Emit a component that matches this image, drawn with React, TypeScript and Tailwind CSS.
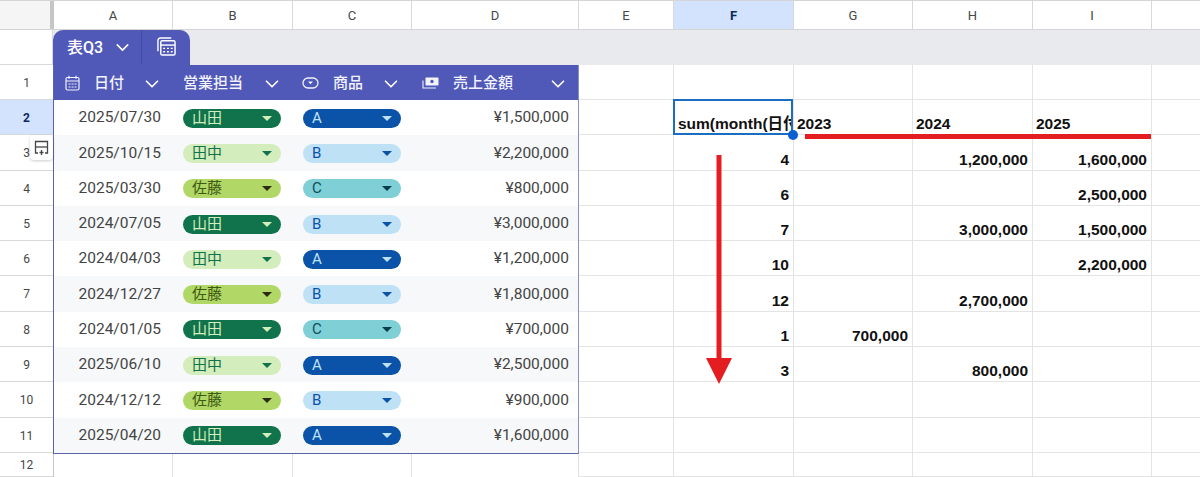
import { ChevronDown } from 'lucide-react';

const rows = [
  { date: '2025/07/30', rep: '山田', item: 'A', amount: '¥1,500,000' },
  { date: '2025/10/15', rep: '田中', item: 'B', amount: '¥2,200,000' },
  { date: '2025/03/30', rep: '佐藤', item: 'C', amount: '¥800,000' },
  { date: '2024/07/05', rep: '山田', item: 'B', amount: '¥3,000,000' },
  { date: '2024/04/03', rep: '田中', item: 'A', amount: '¥1,200,000' },
  { date: '2024/12/27', rep: '佐藤', item: 'B', amount: '¥1,800,000' },
  { date: '2024/01/05', rep: '山田', item: 'C', amount: '¥700,000' },
  { date: '2025/06/10', rep: '田中', item: 'A', amount: '¥2,500,000' },
  { date: '2024/12/12', rep: '佐藤', item: 'B', amount: '¥900,000' },
  { date: '2025/04/20', rep: '山田', item: 'A', amount: '¥1,600,000' },
];

const chipStyles: Record<string, string> = {
  山田: 'bg-[#11734b] text-[#d4edbc]',
  田中: 'bg-[#d4edbc] text-[#11734b]',
  佐藤: 'bg-[#b1d866] text-[#3d5a12]',
  A: 'bg-[#0a53a8] text-[#bfe1f6]',
  B: 'bg-[#bfe1f6] text-[#0a53a8]',
  C: 'bg-[#7fcfd6] text-[#0a4f5c]',
};

const caretStyles: Record<string, string> = {
  山田: 'border-t-[#d4edbc]',
  田中: 'border-t-[#11734b]',
  佐藤: 'border-t-[#2b2b10]',
  A: 'border-t-[#bfe1f6]',
  B: 'border-t-[#0a53a8]',
  C: 'border-t-[#0a3d4c]',
};

// F..J on the right of the table
const pivot = [
  ['', '', '', '', ''],
  ['sum(month(日付', '2023', '2024', '2025', ''],
  ['4', '', '1,200,000', '1,600,000', ''],
  ['6', '', '', '2,500,000', ''],
  ['7', '', '3,000,000', '1,500,000', ''],
  ['10', '', '', '2,200,000', ''],
  ['12', '', '2,700,000', '', ''],
  ['1', '700,000', '', '', ''],
  ['3', '', '800,000', '', ''],
  ['', '', '', '', ''],
  ['', '', '', '', ''],
  ['', '', '', '', ''],
];

const rowHeights = ['h-[35px]', 'h-[35px]', 'h-[35.5px]', 'h-[35.5px]', 'h-[35px]', 'h-[35px]', 'h-[35.5px]', 'h-[35.5px]', 'h-[35px]', 'h-[35.5px]', 'h-[35px]', 'h-[24.5px]'];

function Chip({ label }: { label: string }) {
  return (
    <div className={`mt-px flex h-[19px] w-[98px] items-center justify-between rounded-full pl-[9px] pr-[9px] text-[15px] leading-none ${chipStyles[label]}`}>
      <span>{label}</span>
      <span className={`h-0 w-0 border-x-[5px] border-t-[5px] border-x-transparent ${caretStyles[label]}`} />
    </div>
  );
}

function HeaderCell({ className, icon, label }: { className: string; icon?: React.ReactNode; label: string }) {
  return (
    <div className={`flex h-full items-center text-[15px] font-medium text-[#f1f2fb] ${className}`}>
      {icon}
      <span className="pt-px">{label}</span>
      <ChevronDown className="ml-auto mr-[9px] mt-[2px] text-white" size={22} strokeWidth={1.8} />
    </div>
  );
}

function CalendarIcon() {
  return (
    <svg className="ml-[11px] mr-[14px]" width="15" height="16" viewBox="0 0 15 16" fill="none" stroke="currentColor" strokeWidth="1.2">
      <rect x="1" y="2.5" width="13" height="12.5" rx="1.5" />
      <path d="M1 6h13M4 .8v3M11 .8v3" />
      <path d="M3.5 9h2M6.5 9h2M9.5 9h2M3.5 12h2M6.5 12h2M9.5 12h2" />
    </svg>
  );
}

function DropdownIcon() {
  return (
    <svg className="mr-[14px] ml-[10px]" width="17" height="12" viewBox="0 0 17 12" fill="none" stroke="currentColor" strokeWidth="1.3">
      <rect x="1" y="1" width="15" height="10" rx="5" />
      <path d="M6 4.6h5L8.5 7.2z" fill="currentColor" stroke="none" />
    </svg>
  );
}

function MoneyIcon() {
  return (
    <svg className="mr-[14px] ml-[11px]" width="17" height="12" viewBox="0 0 17 12" fill="none" stroke="currentColor" strokeWidth="1.1">
      <rect x="3.5" y=".5" width="13" height="8" rx=".8" fill="currentColor" stroke="none" />
      <circle cx="10" cy="4.5" r="1.7" fill="#5059b8" stroke="none" />
      <path d="M1 3.5v7.5h13" />
    </svg>
  );
}

function TableIcon() {
  return (
    <svg className="mb-[2px]" width="19" height="19" viewBox="0 0 20 20" fill="none" stroke="currentColor" strokeWidth="1.5">
      <path d="M1 15V3.5A2.5 2.5 0 0 1 3.5 1H15" />
      <rect x="4" y="4" width="15" height="15" rx="1.5" />
      <path d="M4 8.5h15" />
      <path d="M6.5 12h2M10.5 12h2M14.5 12h2M6.5 15.5h2M10.5 15.5h2M14.5 15.5h2" />
    </svg>
  );
}

function HeaderLetter({ letter, className, active }: { letter: string; className: string; active?: boolean }) {
  return (
    <div className={`flex items-center justify-center border-r border-[#d9d9d9] pt-px text-[13px] ${active ? 'bg-[#d3e3fd] font-bold text-[#0b2a5b]' : 'text-[#444746]'} ${className}`}>
      {letter}
    </div>
  );
}

export default function App() {
  return (
    <div
      className="relative h-[477px] w-[1200px] overflow-hidden bg-white"
      style={{ fontFamily: 'Roboto, "Noto Sans CJK JP", sans-serif' }}
    >
      {/* column letters */}
      <div className="flex h-[30px] border-y border-[#d5d5d5]">
        <div className="w-[54px] border-r-4 border-[#c4c7c5] bg-[#f5f5f5]" />
        <HeaderLetter letter="A" className="w-[119px]" />
        <HeaderLetter letter="B" className="w-[120px]" />
        <HeaderLetter letter="C" className="w-[119px]" />
        <HeaderLetter letter="D" className="w-[167px]" />
        <HeaderLetter letter="E" className="w-[95px]" />
        <HeaderLetter letter="F" className="w-[120px]" active />
        <HeaderLetter letter="G" className="w-[119px]" />
        <HeaderLetter letter="H" className="w-[120px]" />
        <HeaderLetter letter="I" className="w-[119px]" />
        <div className="flex-1" />
      </div>

      {/* table name band */}
      <div className="flex h-[35px]">
        <div className="w-[53px] border-b border-r border-[#d9d9d9]" />
        <div className="flex flex-1 bg-[#e8eaed]">
          <div className="flex h-[35px] w-[137px] rounded-t-[10px] bg-[#5059b8] text-white">
            <div className="flex w-[89px] items-center border-r border-[#434ba3] pl-[14px] text-[16px] font-medium">
              <span>表Q3</span>
              <ChevronDown className="ml-auto mr-[8px]" size={21} strokeWidth={1.8} />
            </div>
            <div className="flex flex-1 items-center justify-center pl-px">
              <TableIcon />
            </div>
          </div>
        </div>
      </div>

      <div className="flex">
        {/* row numbers */}
        <div className="w-[54px] shrink-0 border-r border-[#c4c7c5]">
          {rowHeights.map((h, i) => (
            <div
              key={i}
              className={`flex items-center justify-center border-b border-[#d9d9d9] pt-[2px] text-xs ${h} ${i === 1 ? 'bg-[#d3e3fd] font-bold text-[#0b2a5b]' : 'text-[#444746]'}`}
            >
              {i + 1}
            </div>
          ))}
        </div>

        {/* table */}
        <div className="-ml-px w-[526px] shrink-0">
          <div className="border-x border-b border-[#5c62a8] border-r-[#8b8fc4]">
            <div className="flex h-[35px] bg-[#5059b8]">
              <HeaderCell className="w-[118px]" icon={<CalendarIcon />} label="日付" />
              <HeaderCell className="w-[120px] pl-[11px]" label="営業担当" />
              <HeaderCell className="w-[119px]" icon={<DropdownIcon />} label="商品" />
              <HeaderCell className="flex-1" icon={<MoneyIcon />} label="売上金額" />
            </div>
            {rows.map((row, i) => (
              <div
                key={row.date}
                className={`flex items-center text-[15.5px] text-[#444] ${rowHeights[i + 1]} ${i % 2 === 1 ? 'bg-[#f6f8f9]' : 'bg-white'}`}
              >
                <div className="w-[107px] pt-px text-right">{row.date}</div>
                <div className="w-[131px] pl-[22px]">
                  <Chip label={row.rep} />
                </div>
                <div className="w-[119px] pl-[11px]">
                  <Chip label={row.item} />
                </div>
                <div className="flex-1 pr-[9px] pt-px text-right">{row.amount}</div>
              </div>
            ))}
          </div>
          <div className="flex h-[24px]">
            <div className="w-[120px] border-r border-[#e1e1e1]" />
            <div className="w-[120px] border-r border-[#e1e1e1]" />
            <div className="w-[119px] border-r border-[#e1e1e1]" />
            <div className="w-[167px] border-r border-[#e1e1e1]" />
          </div>
        </div>

        {/* cells to the right of the table */}
        <div className="flex-1" style={{ fontFamily: '"Liberation Sans", "Noto Sans CJK JP", sans-serif' }}>
          {pivot.map((cells, r) => (
            <div key={r} className={`grid grid-cols-[95px_120px_119px_120px_119px_1fr] border-b border-[#e4e4e4] text-[15.5px] font-bold leading-[21px] text-[#111] ${rowHeights[r]}`}>
              <div className="border-r border-[#e4e4e4]" />
              {cells.map((cell, c) => {
                const isHeader = r === 1;
                return (
                  <div
                    key={c}
                    className={`flex items-end overflow-hidden whitespace-nowrap border-r border-[#e4e4e4] last:border-r-0 ${
                      isHeader ? (c === 0 ? 'pl-1' : 'pl-[3px]') : 'justify-end pr-[4px]'
                    }`}
                  >
                    {cell}
                  </div>
                );
              })}
            </div>
          ))}
        </div>
      </div>

      {/* selected cell F2 */}
      <div className="absolute left-[673px] top-[99px] h-[36px] w-[120px] border-2 border-[#1a6ec2]" />
      <div className="absolute left-[788px] top-[130px] h-[10px] w-[10px] rounded-full bg-[#0b5fd0]" />

      {/* add-row hover button */}
      <div className="absolute left-[30px] top-[135px] flex h-[25px] w-[23px] items-center justify-center rounded-[4px] bg-white text-[#444746] shadow-[0_1px_3px_rgba(0,0,0,0.2)]">
        <svg width="15" height="16" viewBox="0 0 15 16" fill="none" stroke="currentColor" strokeWidth="1.3">
          <path d="M4 13H1.5V1.5h12V13H11" />
          <path d="M1.5 7h12" />
          <path d="M7.5 10v5M5.5 12.5h4" />
        </svg>
      </div>

      {/* red annotations */}
      <div className="absolute left-[805px] top-[134px] h-[5px] w-[346px] bg-[#e41e20]" />
      <svg className="absolute left-[705px] top-[155px]" width="28" height="230" viewBox="0 0 28 230">
        <path d="M11.5 0h5v203H27L14 229 1 203h10.5z" fill="#e41e20" />
      </svg>
    </div>
  );
}
